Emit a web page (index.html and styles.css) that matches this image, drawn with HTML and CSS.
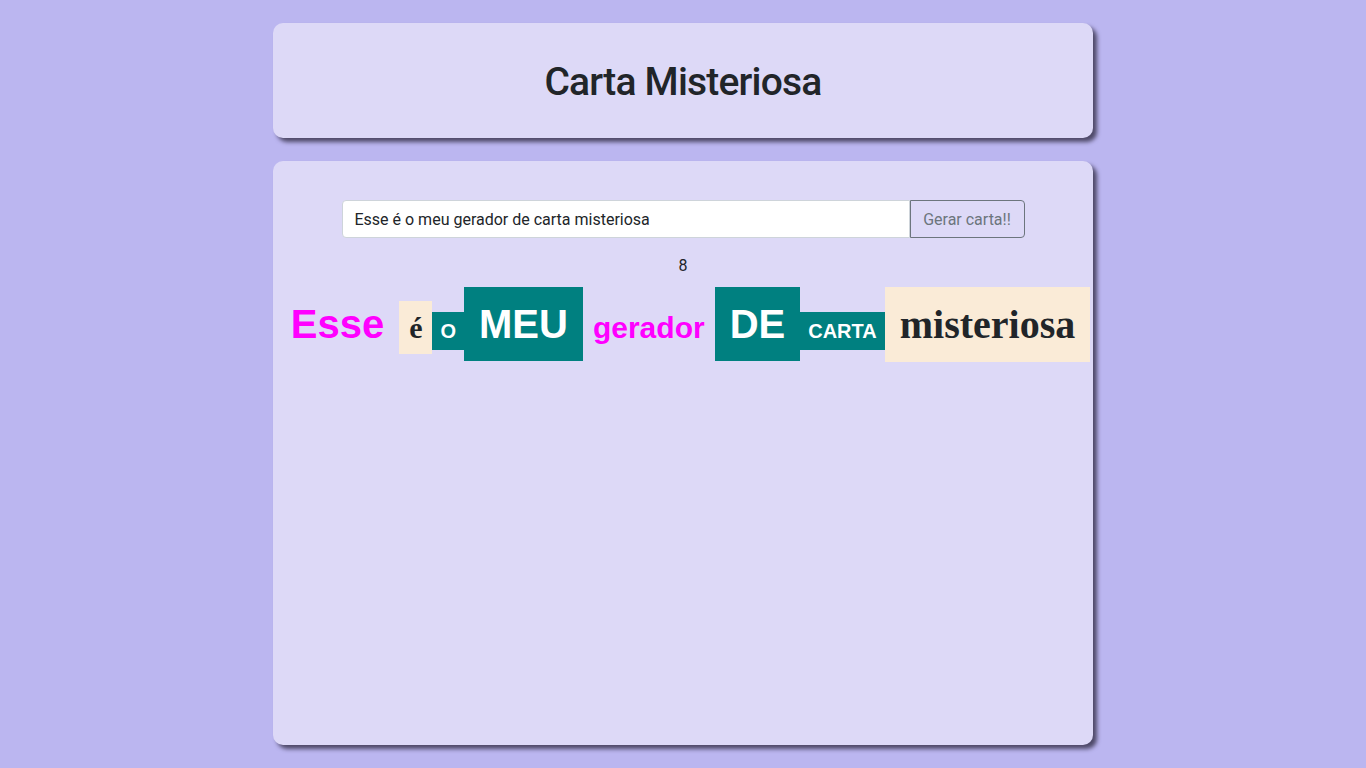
FILE: index.html
```html
<!DOCTYPE html>
<html lang="pt-BR">
<head>
<meta charset="utf-8">
<title>Carta Misteriosa</title>
<link rel="stylesheet" href="styles.css">
</head>
<body>
<main class="page">
  <header class="card header-card">
    <h1 class="title">Carta Misteriosa</h1>
  </header>
  <section class="card main-card">
    <div class="input-group">
      <input class="text-input" type="text" value="Esse é o meu gerador de carta misteriosa">
      <button class="btn-outline" type="button">Gerar carta!!</button>
    </div>
    <p class="counter">8</p>
    <p class="letter"><span class="w magazine2 big">Esse</span><span class="w newspaper medium">é</span><span class="w magazine1 small">o</span><span class="w magazine1 big">meu</span><span class="w magazine2 medium">gerador</span><span class="w magazine1 big">de</span><span class="w magazine1 small">carta</span><span class="w newspaper big">misteriosa</span></p>
  </section>
</main>
</body>
</html>
```

FILE: styles.css
```css
* { box-sizing: border-box; }

html, body {
  margin: 0;
  padding: 0;
}

body {
  background: #bbb6f0;
  font-family: Roboto, "Noto Sans", sans-serif;
  color: #212529;
  min-height: 768px;
}

.page {
  width: 820px;
  margin: 0 auto;
  padding-top: 23px;
  display: flex;
  flex-direction: column;
  gap: 23px;
}

.card {
  background: #ddd9f7;
  border-radius: 10px;
  box-shadow: 4px 4px 4px #4e4968;
}

.header-card {
  height: 115px;
  display: flex;
  align-items: center;
  justify-content: center;
}

.title {
  margin: 0;
  font-family: Roboto, sans-serif;
  font-weight: 500;
  font-size: 39px;
  letter-spacing: -0.8px;
  color: #212529;
  padding-top: 2px;
}

.main-card {
  height: 584px;
  padding-top: 39px;
  display: flex;
  flex-direction: column;
  align-items: center;
}

.input-group {
  display: flex;
  width: 683px;
  height: 38px;
}

.text-input {
  flex: 1;
  height: 38px;
  border: 1px solid #ced4da;
  border-radius: 4px 0 0 4px;
  background: #fff;
  padding: 0 12px;
  font-family: Roboto, sans-serif;
  font-size: 16px;
  color: #212529;
  outline: none;
}

.btn-outline {
  width: 115px;
  height: 38px;
  border: 1px solid #6c757d;
  border-radius: 0 4px 4px 0;
  background: transparent;
  color: #6c757d;
  font-family: Roboto, sans-serif;
  font-size: 16px;
  padding: 0 12px;
}

.counter {
  margin: 18px 0 0;
  font-size: 16px;
  line-height: 20px;
  color: #212529;
}

.letter {
  margin: 0;
  margin-top: 25px;
  width: 820px;
  text-align: center;
  white-space: nowrap;
  line-height: normal;
}

.w {
  font-weight: bold;
}

.magazine1 {
  background: #008080;
  color: #fff;
  font-family: "Liberation Sans", Arial, sans-serif;
  text-transform: uppercase;
}

.magazine2 {
  color: #ff00ff;
  font-family: "Liberation Sans", Arial, sans-serif;
}

.newspaper {
  background: #faebd7;
  color: #212529;
  font-family: "Liberation Serif", "Times New Roman", serif;
}

.big {
  font-size: 40px;
  padding: 15px;
}

.medium {
  font-size: 30px;
  padding: 10px;
}

.small {
  font-size: 20px;
  padding: 8px;
}
```
